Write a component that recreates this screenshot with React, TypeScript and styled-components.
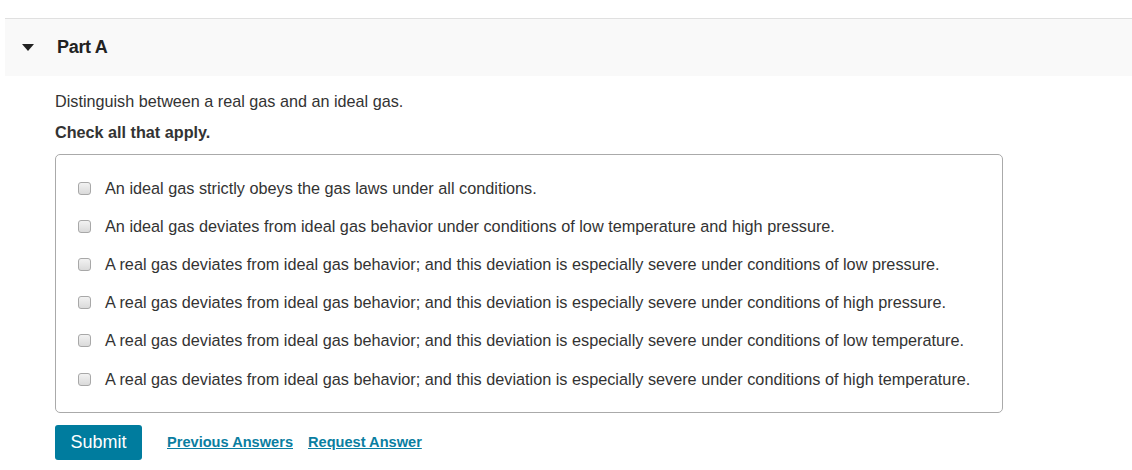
import React from 'react';
import styled, { createGlobalStyle } from 'styled-components';

const GlobalStyle = createGlobalStyle`
  body {
    margin: 0;
    background: #fff;
    font-family: Arial, "Liberation Sans", Helvetica, sans-serif;
    color: #333;
  }
`;

const Page = styled.div`
  padding: 18px 0 0 5px;
`;

const Section = styled.section`
  border-top: 1px solid #e0e0e0;
`;

const Header = styled.div`
  display: flex;
  align-items: center;
  height: 57px;
  background: #f9f9f9;
  padding-left: 17px;
`;

const Caret = styled.span`
  width: 0;
  height: 0;
  border-left: 6px solid transparent;
  border-right: 6px solid transparent;
  border-top: 7px solid #222;
  margin-right: 23px;
`;

const Title = styled.h2`
  margin: 0;
  font-size: 18px;
  font-weight: bold;
  color: #222;
  letter-spacing: -0.3px;
`;

const Body = styled.div`
  padding: 15px 0 0 50px;
`;

const Prompt = styled.p`
  margin: 0;
  font-size: 16.2px;
  line-height: 20px;
  color: #333;
`;

const Instruction = styled.p`
  margin: 11px 0 0;
  font-size: 16.2px;
  line-height: 20px;
  font-weight: bold;
  color: #333;
`;

const OptionsBox = styled.div`
  margin-top: 12px;
  width: 948px;
  border: 1px solid #aaa;
  border-radius: 5px;
  padding: 14px 0 15px 22px;
  box-sizing: border-box;
  height: 259px;
`;

const OptionRow = styled.label`
  display: flex;
  align-items: center;
  height: 38.2px;
  font-size: 16.25px;
  color: #333;
  cursor: pointer;
`;

const Box = styled.span`
  width: 13px;
  height: 13px;
  border: 1px solid #a8a8a8;
  border-radius: 3px;
  background: linear-gradient(#f2f2f2, #dadada);
  margin-right: 14px;
  flex-shrink: 0;
  box-sizing: border-box;
`;

const Actions = styled.div`
  display: flex;
  align-items: center;
  margin-top: 12px;
`;

const SubmitButton = styled.button`
  width: 87px;
  height: 35px;
  border: none;
  border-radius: 3px;
  background: #007c9e;
  color: #fff;
  font-family: Arial, "Liberation Sans", sans-serif;
  font-size: 18px;
  cursor: pointer;
  margin-right: 25px;
`;

const ActionLink = styled.a`
  font-size: 14.6px;
  font-weight: bold;
  color: #0a7ea1;
  text-decoration: underline;
  margin-right: 15px;
  margin-top: -2px;
  cursor: pointer;
`;

const options = [
  'An ideal gas strictly obeys the gas laws under all conditions.',
  'An ideal gas deviates from ideal gas behavior under conditions of low temperature and high pressure.',
  'A real gas deviates from ideal gas behavior; and this deviation is especially severe under conditions of low pressure.',
  'A real gas deviates from ideal gas behavior; and this deviation is especially severe under conditions of high pressure.',
  'A real gas deviates from ideal gas behavior; and this deviation is especially severe under conditions of low temperature.',
  'A real gas deviates from ideal gas behavior; and this deviation is especially severe under conditions of high temperature.',
];

export default function App() {
  return (
    <Page>
      <GlobalStyle />
      <Section>
        <Header>
          <Caret />
          <Title>Part A</Title>
        </Header>
        <Body>
          <Prompt>Distinguish between a real gas and an ideal gas.</Prompt>
          <Instruction>Check all that apply.</Instruction>
          <OptionsBox>
            {options.map(text => (
              <OptionRow key={text}>
                <Box />
                {text}
              </OptionRow>
            ))}
          </OptionsBox>
          <Actions>
            <SubmitButton>Submit</SubmitButton>
            <ActionLink>Previous Answers</ActionLink>
            <ActionLink>Request Answer</ActionLink>
          </Actions>
        </Body>
      </Section>
    </Page>
  );
}
